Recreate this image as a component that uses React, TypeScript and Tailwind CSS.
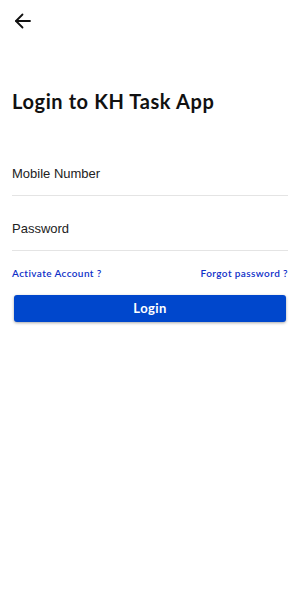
import React from "react";

export default function App() {
  return (
    <div className="w-[300px] h-[600px] bg-white">
      <div className="pt-[13px] pl-[14px]">
        <svg width="18" height="16" viewBox="0 0 18 16" fill="none" stroke="#111" strokeWidth="1.8" strokeLinecap="round" strokeLinejoin="round">
          <path d="M16 8H2" />
          <path d="M8.5 1.5L2 8l6.5 6.5" />
        </svg>
      </div>
      <h1 className="mt-[58px] pl-[12px] text-[20px] leading-[28px] font-bold text-[#111] font-['Lato',sans-serif] tracking-[0.6px]">
        Login to KH Task App
      </h1>
      <div className="mx-[12px] mt-[35px]">
        <div className="h-[46px] flex items-end pb-[12px] border-b border-[#e4e4e4] text-[13px] text-[#222] font-['Liberation_Sans',Arial,sans-serif]">
          Mobile Number
        </div>
        <div className="h-[55px] flex items-end pb-[12px] border-b border-[#e4e4e4] text-[13px] text-[#222] font-['Liberation_Sans',Arial,sans-serif]">
          Password
        </div>
      </div>
      <div className="mx-[12px] mt-[15px] flex justify-between text-[10px] leading-[14px] font-semibold text-[#0f30c8] font-['Lato',sans-serif] tracking-[0.4px]">
        <span>Activate Account ?</span>
        <span>Forgot password ?</span>
      </div>
      <div className="mx-[14px] mt-[15px] h-[27px] rounded-[3px] bg-[#0047cc] shadow-[0_1px_3px_rgba(0,0,0,0.35)] flex items-center justify-center text-white text-[13px] font-bold font-['Lato',sans-serif] tracking-[0.4px]">
        Login
      </div>
    </div>
  );
}
